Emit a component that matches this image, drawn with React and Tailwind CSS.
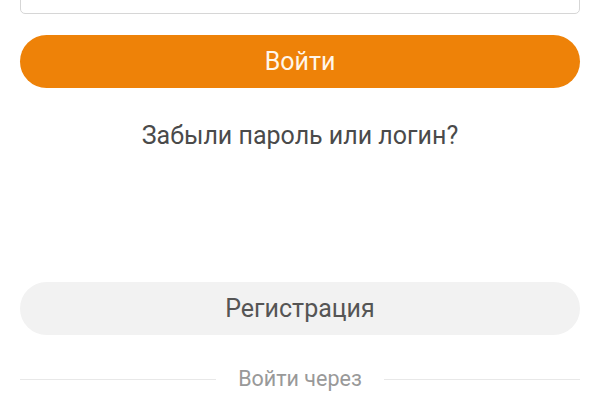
export default function App() {
  return (
    <div className="h-[400px] w-[600px] overflow-hidden bg-white px-5 font-['Roboto',sans-serif]">
      <div className="-mt-[40px] h-[54px] rounded-[5px] border border-[#d6d6d6] bg-white" />

      <button
        type="button"
        className="mt-[21px] flex h-[53px] w-full items-center justify-center rounded-full bg-[#ee8208] text-[25px] text-[#fff6ea]"
      >
        Войти
      </button>

      <p className="mt-[31px] text-center text-[25px] leading-[34px] text-[#4a4a4a]">Забыли пароль или логин?</p>

      <button
        type="button"
        className="mt-[129px] flex h-[53px] w-full items-center justify-center rounded-full bg-[#f2f2f2] text-[25px] text-[#555]"
      >
        Регистрация
      </button>

      <div className="mt-[30px] flex items-center gap-[22px]">
        <div className="h-px flex-1 bg-[#e8e8e8]" />
        <span className="text-[21.5px] leading-[28px] text-[#999]">Войти через</span>
        <div className="h-px flex-1 bg-[#e8e8e8]" />
      </div>
    </div>
  );
}
